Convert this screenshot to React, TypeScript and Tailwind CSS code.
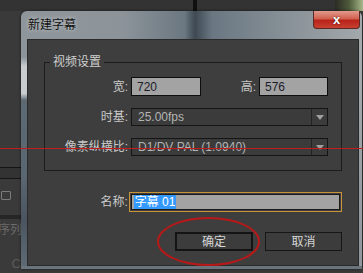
import React from 'react'

const font = "font-['Liberation_Sans','Noto_Sans_CJK_SC',sans-serif]"

function Select({ value }: { value: string }) {
    return (
        <div className="flex h-[18px] w-[197px] border border-[#151515] bg-[#3b3b3b]">
            <div className="flex-1 flex items-center pl-[6px] text-[12px] text-[#b4b4b4] leading-none">{value}</div>
            <div className="w-[16px] border-l border-[#232323] flex items-center justify-center">
                <div className="w-0 h-0 border-l-[4px] border-r-[4px] border-t-[5px] border-l-transparent border-r-transparent border-t-[#a0a0a0]"></div>
            </div>
        </div>
    )
}

export default function App() {
    return (
        <div className={`relative w-[363px] h-[273px] overflow-hidden bg-[#3a3a3a] flex ${font}`}>
            {/* underlying app, left panel fragments */}
            <div className="w-[21px] flex flex-col">
                <div className="h-[11px] bg-[#333333]"></div>
                <div className="h-[156px]"></div>
                <div className="h-[1px] bg-[#141414]"></div>
                <div className="h-[10px] bg-[#333333]"></div>
                <div className="h-[1px] bg-[#161616]"></div>
                <div className="h-[10px]"></div>
                <div className="h-[13px] flex items-center pl-[1px]">
                    <div className="w-[10px] h-[9px] border border-[#7a7a7a] rounded-[1px]"></div>
                </div>
                <div className="h-[13px]"></div>
                <div className="h-[4px] bg-[#262626]"></div>
                <div className="h-[4px]"></div>
                <div className="h-[15px] text-[12px] leading-[15px] text-[#6a6a6a] whitespace-nowrap -ml-[2px]">序列</div>
                <div className="h-[19px]"></div>
                <div className="h-[14px] text-[13px] leading-[14px] text-[#5a5a5a] text-right">C</div>
            </div>
            <div className="flex-1 flex flex-col">
                <div className="h-[11px] bg-[#333333] flex">
                    <div className="w-[172px]"></div>
                    <div className="w-[4px] bg-[#101010]"></div>
                    <div className="flex-1"></div>
                    <div className="w-[28px] bg-[linear-gradient(to_right,#2b2b25,#4e5a3a,#a8b88a)]"></div>
                </div>
            </div>

            {/* dialog window */}
            <div className="absolute left-[21px] top-[11px] w-[341px] h-[258px] rounded-t-[6px] bg-[linear-gradient(to_right,#8f969b_0%,#8c949a_30%,#6b7781_48%,#3e4952_51%,#6a7782_56%,#8a9399_80%,#a3a8ab_100%)] flex flex-col shadow-[0_0_3px_rgba(0,0,0,0.6)]">
                <div className="h-[28px] flex items-start">
                    <div className="pl-[7px] pt-[7px] text-[12px] leading-[14px] text-[#111] [text-shadow:0_0_4px_rgba(255,255,255,0.6)]">新建字幕</div>
                    <div className="flex-1"></div>
                    <div className="mr-[2px] w-[47px] h-[18px] rounded-b-[4px] border border-[#5a2a26] border-t-0 bg-[linear-gradient(to_bottom,#e29a8e_0%,#d2614f_45%,#b8231a_55%,#c84030_100%)] flex items-center justify-center">
                        <span className="text-[13px] font-bold text-white leading-none [text-shadow:0_0_2px_rgba(0,0,0,0.7)]">x</span>
                    </div>
                </div>
                <div className="flex-1 flex">
                    <div className="w-[6px] bg-[linear-gradient(to_bottom,#8d959b_0%,#8d959b_8%,#c8cccf_12%,#c8cccf_24%,#5d6973_27%,#5a6670_60%,#4a5560_80%,#5e6a74_100%)]"></div>
                    <div className="w-[332px] h-[227px] bg-[#3e3e3e] border border-[#2a2a2a] flex flex-col px-[16px]">
                        {/* group box */}
                        <div className="mt-[22px] h-[109px] border border-[#1c1c1c] relative flex flex-col">
                            <div className="absolute -top-[8px] left-[5px] px-[3px] bg-[#3e3e3e] text-[12px] leading-[14px] text-[#cfcfcf]">视频设置</div>
                            <div className="mt-[14px] flex items-center h-[19px]">
                                <div className="w-[83px] text-right text-[12px] text-[#c8c8c8]">宽:</div>
                                <div className="ml-[3px] w-[70px] h-[19px] bg-[#a3a3a3] border border-[#0e0e0e] flex items-center pl-[5px] text-[12px] text-[#1c1c2a]">720</div>
                                <div className="w-[55px] text-right text-[12px] text-[#c8c8c8]">高:</div>
                                <div className="ml-[3px] w-[69px] h-[19px] bg-[#a3a3a3] border border-[#0e0e0e] flex items-center pl-[5px] text-[12px] text-[#1c1c2a]">576</div>
                            </div>
                            <div className="mt-[12px] flex items-center">
                                <div className="w-[83px] text-right text-[12px] text-[#c8c8c8]">时基:</div>
                                <div className="ml-[3px]"><Select value="25.00fps" /></div>
                            </div>
                            <div className="mt-[12px] flex items-center">
                                <div className="w-[83px] text-right text-[12px] text-[#c8c8c8] whitespace-nowrap">像素纵横比:</div>
                                <div className="ml-[3px]"><Select value="D1/DV PAL (1.0940)" /></div>
                            </div>
                        </div>
                        {/* name */}
                        <div className="mt-[21px] flex items-center">
                            <div className="w-[84px] text-right text-[12px] text-[#c8c8c8]">名称:</div>
                            <div className="ml-[1px] w-[214px] h-[20px] border border-[#c8943a] p-[1px]">
                                <div className="w-full h-full bg-[#a3a3a3] border border-[#1a1a1a] flex items-center pl-[2px]">
                                    <span className="bg-[#3399ff] text-white text-[12px] leading-[14px] px-[1px]">字幕 01</span>
                                </div>
                            </div>
                        </div>
                        {/* buttons */}
                        <div className="mt-[20px] flex justify-end gap-[12px] pr-[0px]">
                            <button className="w-[78px] h-[19px] bg-[#3c3c3c] border-2 border-[#141414] text-[12px] text-[#d6d6d6] flex items-center justify-center">确定</button>
                            <button className="w-[77px] h-[19px] bg-[#3c3c3c] border border-[#161616] text-[12px] text-[#d6d6d6] flex items-center justify-center">取消</button>
                        </div>
                    </div>
                    <div className="flex-1 bg-[linear-gradient(to_bottom,#a6abae,#8f979d)]"></div>
                </div>
                <div className="h-[3px] bg-[#6a747c]"></div>
            </div>

            {/* annotation overlays */}
            <div className="absolute left-0 top-[148px] w-full h-[1px] bg-[#c21c1c]"></div>
            <div className="absolute left-[157px] top-[217px] w-[103px] h-[49px] rounded-[50%] border-2 border-[#b81818]"></div>
        </div>
    )
}
